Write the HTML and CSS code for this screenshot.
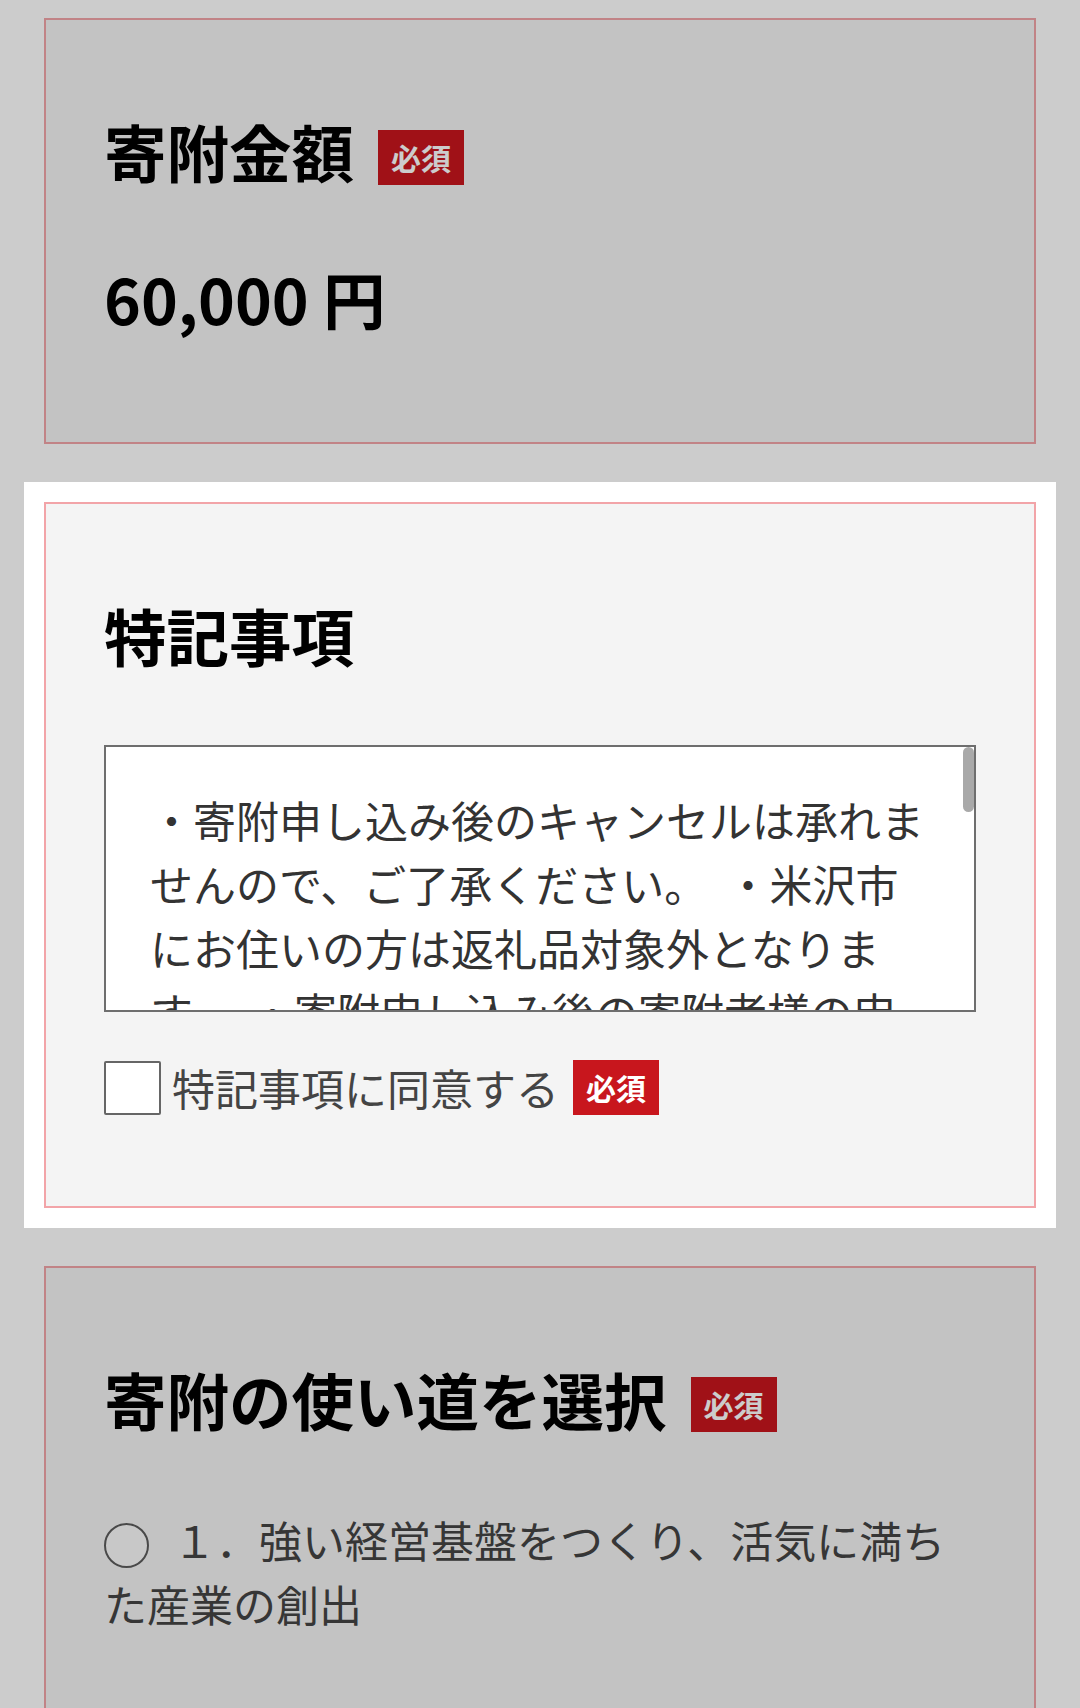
FILE: index.html
```html
<!DOCTYPE html>
<html lang="ja">
<head>
  <meta charset="UTF-8">
  <meta name="viewport" content="width=device-width, initial-scale=1.0">
  <title>寄附申し込み</title>
  <link rel="stylesheet" href="styles.css">
</head>
<body>

  <main class="form">
    <section class="card">
      <h2 class="card-title">寄附金額<span class="required">必須</span></h2>
      <p class="amount">60,000 円</p>
    </section>

    <div class="spotlight">
      <section class="card">
        <h2 class="card-title">特記事項</h2>
        <div class="notes">
          <p class="notes-text">・寄附申し込み後のキャンセルは承れませんので、ご了承ください。  ・米沢市にお住いの方は返礼品対象外となります。  ・寄附申し込み後の寄附者様の申し込み内容の変更は承れませんので、ご注意ください。</p>
          <span class="notes-thumb"></span>
        </div>
        <label class="agree">
          <input type="checkbox" class="check">
          <span class="agree-text">特記事項に同意する</span>
          <span class="required">必須</span>
        </label>
      </section>
    </div>

    <section class="card card-last">
      <h2 class="card-title">寄附の使い道を選択<span class="required">必須</span></h2>
      <label class="option"><input type="radio" name="use" class="radio">１．強い経営基盤をつくり、活気に満ちた産業の創出</label>
    </section>
  </main>

</body>
</html>
```

FILE: styles.css
```css
:root {
  --page-bg: #ffffff;
  --card-bg: #f4f4f4;
  --card-border: #f2a4a8;
  --badge-red: #c8161d;
  --text-dark: #000;
  --text-body: #333;
  --text-label: #444;
}

body {
  font-family: "Noto Sans CJK JP", "Noto Sans", sans-serif;
  background-color: var(--page-bg);
  color: var(--text-dark);
  margin: 0;
  padding: 18px 0 0;
}

.form {
  display: flex;
  flex-direction: column;
  gap: 38px;
}

.card {
  margin: 0 44px;
  padding: 60px 58px;
  background: var(--card-bg);
  border: 2px solid var(--card-border);
}

.spotlight {
  position: relative;
  z-index: 1;
  margin: 0 24px;
  padding: 20px;
  background: #fff;
  box-shadow: 0 0 0 3000px rgba(0, 0, 0, 0.2);
}

.spotlight .card {
  margin: 0;
}

.card-title {
  margin: 24px 0 0;
  font-size: 62.5px;
  font-weight: 700;
  line-height: 1.5;
}

.required {
  display: inline-block;
  vertical-align: middle;
  height: 55px;
  margin: 0 0 8px 24px;
  padding: 0 13px;
  background: var(--badge-red);
  color: #fff;
  font-size: 30px;
  font-weight: 700;
  line-height: 55px;
}

.amount {
  margin: 53px 0 37px;
  font-size: 62.5px;
  font-weight: 700;
  line-height: 1.5;
}

/* textarea look-alike */
.notes {
  position: relative;
  box-sizing: border-box;
  height: 267px;
  margin-top: 64px;
  padding: 40px 44px 0 44px;
  background: #fff;
  border: 2px solid #6e6e6e;
  overflow: hidden;
}

.notes-text {
  margin: 0;
  color: var(--text-body);
  font-size: 43px;
  line-height: 64px;
  white-space: pre-wrap;
}

.notes-thumb {
  position: absolute;
  top: 0;
  right: 0;
  width: 11px;
  height: 65px;
  background: #a9a9a9;
  border-radius: 6px;
}

.agree {
  display: flex;
  align-items: center;
  margin: 43px 0 26px;
  color: var(--text-label);
  font-size: 43px;
  line-height: 1.5;
}

.agree .required {
  margin: 0 0 0 14px;
}

.check {
  appearance: none;
  box-sizing: border-box;
  width: 57px;
  height: 54px;
  margin: 0 11px 0 0;
  background: #fff;
  border: 2px solid #666;
  border-radius: 2px;
}

.card-last {
  padding-bottom: 120px;
}

.option {
  display: block;
  margin-top: 61px;
  color: var(--text-label);
  font-size: 43px;
  line-height: 64.5px;
}

.radio {
  appearance: none;
  box-sizing: border-box;
  width: 45px;
  height: 45px;
  margin: 0 24px 0 0;
  vertical-align: middle;
  background: #fafafa;
  border: 2px solid #5c5c5c;
  border-radius: 50%;
}
```
